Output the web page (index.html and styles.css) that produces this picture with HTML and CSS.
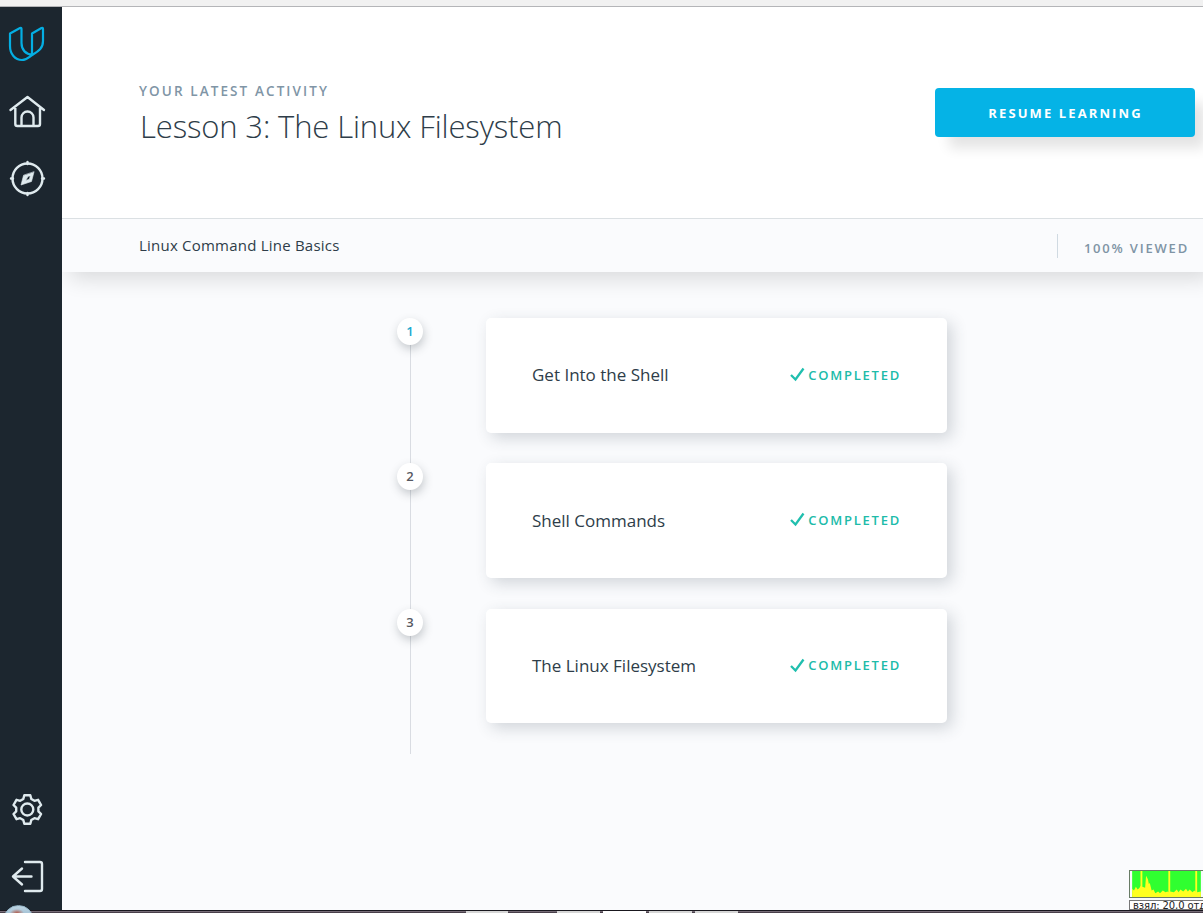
FILE: index.html
```html
<!DOCTYPE html>
<html lang="en">
<head>
<meta charset="utf-8">
<title>Linux Command Line Basics</title>
<link rel="stylesheet" href="styles.css">
</head>
<body>
<div class="browser-edge"></div>
<div class="app">
  <nav class="sidebar">
    <a class="logo"><svg width="54" height="71" viewBox="0 7 54 71"><path d="M10 33.500V46C10 54 15 60 22 60C27 60 29 57 33 54.500C39 51 43 48 43 41V29Q43 27.500 41.500 28L32 33.500V54.500C26 54.500 21.500 50 21.500 43V29Q21.500 27.500 20 28Z"/></svg></a>
    <a><svg width="54" height="67" viewBox="0 78 54 67"><path d="M10.500 110L27.500 97L44 110M15.300 108V124Q15.300 126 17.300 126H38Q40 126 40 124V108M21.500 126V117.500A6 6 0 0 1 33.500 117.500V126"/></svg></a>
    <a><svg width="54" height="67" viewBox="0 145 54 67"><circle cx="27.500" cy="178.500" r="15"/><path d="M27.500 162V164M27.500 193V195M11 178.500H13M42 178.500H44"/><path class="needle" fill-rule="evenodd" d="M34 172L31.500 181.500L21 185L23.500 175.500ZM28 176.500L25.800 180.500L29.300 179.200L30.300 176Z"/></svg></a>
    <span class="spacer"></span>
    <a><svg width="54" height="67" viewBox="-27.300 -33.500 54 67"><path d="M-3 -14.200H3L4 -10.500L7.100 -8.700L10.800 -9.700L13.800 -4.500L11.100 -1.800V1.800L13.800 4.500L10.800 9.700L7.100 8.700L4 10.500L3 14.200H-3L-4 10.500L-7.100 8.700L-10.800 9.700L-13.800 4.500L-11.100 1.800V-1.800L-13.800 -4.500L-10.800 -9.700L-7.100 -8.700L-4 -10.500Z"/><circle r="6"/></svg></a>
    <a><svg width="54" height="67" viewBox="0 843 54 67"><path d="M25 862H40Q42 862 42 864V889Q42 891 40 891H25M31.500 876.500H13M22 868.500L13 876.500L22 884.500"/></svg></a>
  </nav>
  <main class="main">
    <header class="hero">
      <div class="activity">
        <div class="eyebrow">YOUR LATEST ACTIVITY</div>
        <h1 class="title">Lesson 3: The Linux Filesystem</h1>
      </div>
      <a class="resume">RESUME LEARNING</a>
    </header>
    <div class="course-bar">
      <span class="course">Linux Command Line Basics</span>
      <span class="viewed">100% VIEWED</span>
    </div>
    <section class="lessons">
      <div class="row"><div class="step"><span class="dot current">1</span></div><article class="card"><span class="name">Get Into the Shell</span><span class="done"><svg width="15" height="15" viewBox="0 0 15 15"><path d="M1 8L5.500 12.500L13.500 1.500"/></svg>COMPLETED</span></article></div>
      <div class="row"><div class="step"><span class="dot">2</span></div><article class="card second"><span class="name">Shell Commands</span><span class="done"><svg width="15" height="15" viewBox="0 0 15 15"><path d="M1 8L5.500 12.500L13.500 1.500"/></svg>COMPLETED</span></article></div>
      <div class="row"><div class="step"><span class="dot">3</span></div><article class="card third"><span class="name">The Linux Filesystem</span><span class="done"><svg width="15" height="15" viewBox="0 0 15 15"><path d="M1 8L5.500 12.500L13.500 1.500"/></svg>COMPLETED</span></article></div>
    </section>
  </main>
</div>
<div class="taskbar"><i class="t1"></i><i class="t2"></i><i class="t3"></i><i class="t4"></i><i class="t5"></i></div>
<div class="orb"></div>
<div class="cloud-widget"><svg width="29" height="24" viewBox="0 0 29 24"><circle cx="9.500" cy="14" r="3.700"/><circle cx="15.500" cy="8" r="3.700"/><path d="M12.500 11.500L17 16.500Q20 18.500 20.500 14Q23 10.500 24.500 15M24.500 17.500V20"/></svg><span>Б</span></div>
<div class="traffic">
  <svg class="graph" width="74" height="28" viewBox="0 0 74 28"><path class="green" d="M0 0H74V28H0Z"/><path class="yellow" d="M0 28V19L2 21L4 17L6 20L8 18L9 16V0H11V17L14 18L15 5L17 9L18 14L19 13L21 21L23 20L25 24L28 22L30 24L33 21L36 23L38 22L39 23V0H41V22L45 23L48 20L50 23L52 20L55 22L58 19L60 22L62 20L65 23L67 21L68 22V0H70V23L74 22V28Z"/></svg>
  <div class="rate">взял: 20,0 отд</div>
</div>
</body>
</html>
```

FILE: styles.css
```css
* { box-sizing: border-box; }
body { margin: 0; width: 1203px; height: 913px; overflow: hidden; position: relative; display: flex; flex-direction: column; font-family: "Open Sans", sans-serif; color: #2e3d49; background: #fafbfd; }
.browser-edge { height: 7px; flex: none; background: #f1f1f1; border-bottom: 1px solid #b4b5b8; }
.app { height: 903px; flex: none; display: flex; }
.sidebar { width: 62px; flex: none; background: #1c262f; display: flex; flex-direction: column; }
.sidebar a, .sidebar svg { display: block; }
.sidebar path, .sidebar circle { fill: none; stroke: #dfeaee; stroke-width: 2.4; stroke-linecap: round; stroke-linejoin: round; }
.sidebar .logo path { stroke: #04aee3; stroke-width: 2.2; }
.sidebar .needle { fill: #dfeaee; stroke-width: .6; }
.spacer { flex: 1; }
.main { flex: 1; min-width: 0; display: flex; flex-direction: column; overflow: hidden; }
.hero { height: 211px; flex: none; background: #fff; padding: 74px 8px 0 77px; display: flex; justify-content: space-between; align-items: flex-start; position: relative; z-index: 1; }
.eyebrow { font-size: 13.500px; line-height: 20px; font-weight: 600; letter-spacing: 2.100px; color: #8095a6; white-space: nowrap; }
.title { margin: 4px 0 0 1px; font-size: 31px; line-height: 42px; font-weight: 300; letter-spacing: -.14px; white-space: nowrap; }
.resume { width: 260px; height: 49px; margin-top: 7px; line-height: 51px; text-align: center; padding-left: 1px; border-radius: 4px; background: #05b3e6; color: #fff; font-size: 13px; font-weight: 700; letter-spacing: 2.100px; box-shadow: 12px 13px 13px -2px rgba(0,0,0,.11); }
.course-bar { height: 54px; flex: none; border-top: 1px solid #dbe0e3; background: #fafbfd; padding: 0 14px 0 77px; display: flex; justify-content: space-between; align-items: center; box-shadow: 8px 6px 22px rgba(0,0,0,.14); }
.course { margin-top: -2px; font-size: 15px; letter-spacing: .22px; white-space: nowrap; }
.viewed { border-left: 1px solid #d0dae2; height: 24px; padding-left: 26px; font-size: 13px; line-height: 29px; font-weight: 600; letter-spacing: 1.800px; color: #7f94a5; white-space: nowrap; }
.lessons { padding: 46px 0 0 334px; display: flex; flex-direction: column; }
.row { display: flex; height: 145.300px; }
.step { width: 90px; flex: none; padding-left: 1px; background: linear-gradient(#d9dce2, #d9dce2) 14px 0 / 1px 100% no-repeat; }
.dot { display: block; width: 26px; height: 27px; border-radius: 50%; background: #fff; text-align: center; font-size: 13px; font-weight: 600; line-height: 27px; color: #555861; box-shadow: 1px 4px 10px rgba(40,50,60,.25); }
.dot.current { color: #20a9cf; }
.card { width: 461px; height: 115px; border-radius: 5px; background: #fff; padding: 0 46px 2px; display: flex; align-items: center; justify-content: space-between; box-shadow: 5px 5px 16px rgba(46,61,73,.2); }
.card.third { height: 114px; padding-bottom: 1px; }
.name { font-size: 17px; white-space: nowrap; }
.second .name { margin-top: 1px; }
.done { display: flex; align-items: center; gap: 3px; color: #20bba9; font-size: 13px; font-weight: 600; letter-spacing: 1.750px; }
.done path { fill: none; stroke: #20bfae; stroke-width: 2.300; }
.taskbar { height: 3px; flex: none; display: flex; padding-left: 466px; gap: 3px; background: linear-gradient(#19171e 1px, #8c828d 1px, #332b34); }
.taskbar i { height: 2px; margin-top: 1px; background: #d6d6d6; }
.t1 { width: 42px; margin-right: 46px; }
.t2, .t3, .t4, .t5 { width: 43px; }
.taskbar .t3 { background: #fff; }
.orb { position: absolute; left: 3px; top: 905px; width: 31px; height: 31px; border-radius: 50%; border: 1px solid #93b3c5; background: radial-gradient(ellipse 7px 4px at 13px 7px, #b35d4d, transparent), linear-gradient(#bdd4e2, #6495b6); }
.cloud-widget { position: absolute; left: 1167px; top: 15px; width: 44px; height: 26px; border: 1px solid #2278b6; border-radius: 3px; background: #d9effb; display: flex; overflow: hidden; font: 11px/25px "Liberation Sans", sans-serif; color: #3d6079; }
.cloud-widget svg { background: linear-gradient(#43b0ef, #1885d1); flex: none; }
.cloud-widget path, .cloud-widget circle { fill: none; stroke: #fff; stroke-width: 2.500; }
.cloud-widget span { padding-left: 2px; }
.traffic { position: absolute; left: 1129px; top: 870px; width: 74px; height: 40px; overflow: hidden; }
.graph { display: block; border: 1px solid #687b65; border-right: 0; }
.green { fill: #30ff30; }
.yellow { fill: #ffff20; }
.rate { height: 10px; margin-top: 2px; padding-left: 3px; overflow: hidden; border: 1px solid #777; border-right: 0; background: #fff; font: 10px/10px "DejaVu Sans", sans-serif; letter-spacing: -.1px; color: #222; white-space: nowrap; }
```
